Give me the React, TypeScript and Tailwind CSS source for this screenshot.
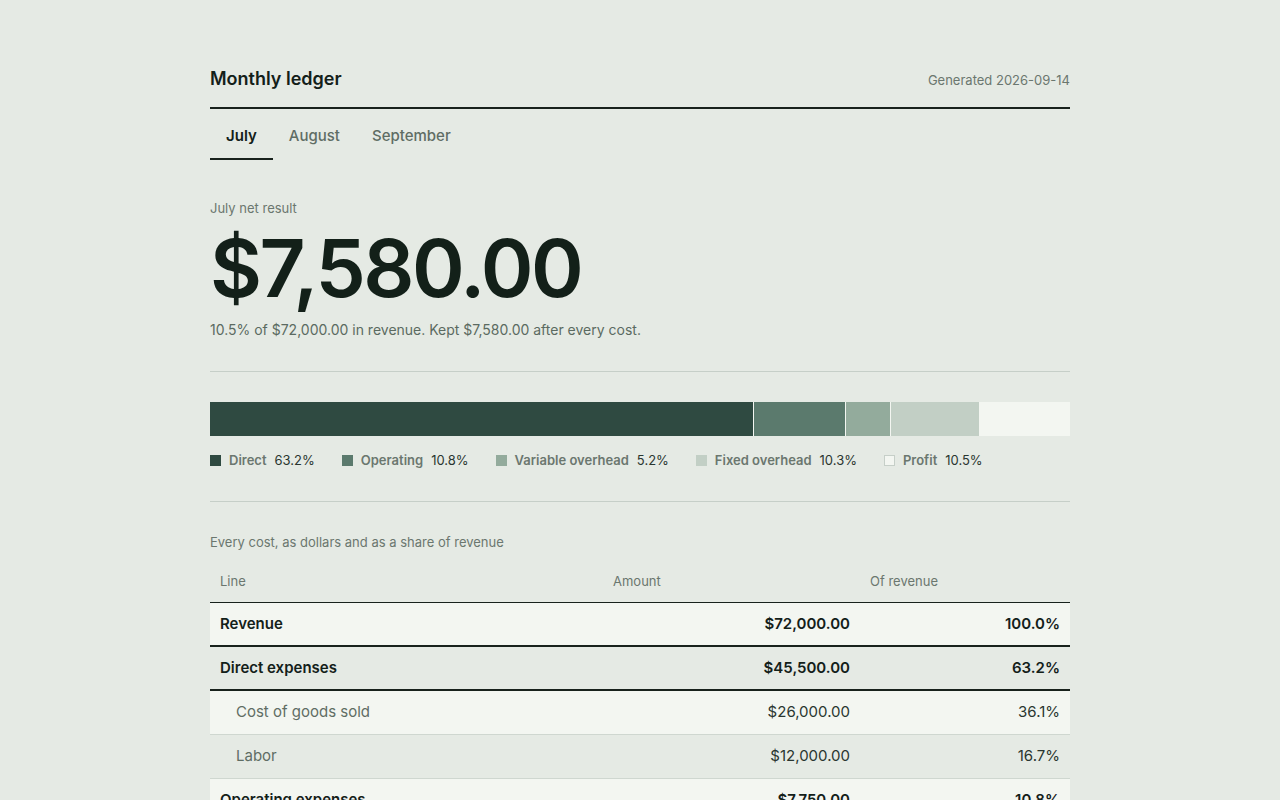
import { useState } from "react";

const months = ["July", "August", "September"];

const segments = [
  { label: "Direct", pct: 63.2, color: "bg-[#2f4a41]", border: false },
  { label: "Operating", pct: 10.8, color: "bg-[#5b7a6d]", border: false },
  { label: "Variable overhead", pct: 5.2, color: "bg-[#93ab9c]", border: false },
  { label: "Fixed overhead", pct: 10.3, color: "bg-[#c2cfc5]", border: false },
  { label: "Profit", pct: 10.5, color: "bg-[#f3f6f1]", border: true },
];

type Row = { line: string; amount: string; share: string; kind: "total" | "group" | "item" };

const rows: Row[] = [
  { line: "Revenue", amount: "$72,000.00", share: "100.0%", kind: "total" },
  { line: "Direct expenses", amount: "$45,500.00", share: "63.2%", kind: "group" },
  { line: "Cost of goods sold", amount: "$26,000.00", share: "36.1%", kind: "item" },
  { line: "Labor", amount: "$12,000.00", share: "16.7%", kind: "item" },
  { line: "Operating expenses", amount: "$7,750.00", share: "10.8%", kind: "group" },
  { line: "Rent", amount: "$4,500.00", share: "6.3%", kind: "item" },
  { line: "Utilities", amount: "$3,250.00", share: "4.5%", kind: "item" },
  { line: "Variable overhead", amount: "$3,744.00", share: "5.2%", kind: "group" },
  { line: "Fixed overhead", amount: "$7,426.00", share: "10.3%", kind: "group" },
  { line: "Net result", amount: "$7,580.00", share: "10.5%", kind: "total" },
];

export default function App() {
  const [month, setMonth] = useState("July");

  return (
    <div className="min-h-screen bg-[#e5eae4] text-[#132019] font-['Inter',sans-serif]">
      <div className="mx-auto w-[860px] pt-[65px] pb-20">
        <header className="flex items-baseline justify-between border-b-2 border-[#18221c] pb-[14px]">
          <h1 className="text-lg font-semibold leading-7">Monthly ledger</h1>
          <span className="text-[13px] text-[#6b776f]">Generated 2026-09-14</span>
        </header>

        <nav className="flex">
          {months.map((m) => (
            <button
              key={m}
              onClick={() => setMonth(m)}
              className={
                m === month
                  ? "h-[51px] px-4 pt-[5px] border-b-2 border-[#18221c] text-[15px] font-semibold text-[#132019]"
                  : "h-[51px] px-4 pt-[5px] border-b-2 border-transparent text-[15px] font-medium text-[#5f6d64]"
              }
            >
              {m}
            </button>
          ))}
        </nav>

        <section className="mt-[38px]">
          <div className="text-[13px] leading-5 text-[#6b776f]">{month} net result</div>
          <div className="mt-[6px] text-[80px] font-semibold leading-[88px] tracking-[-2.5px]">
            $7,580.00
          </div>
          <p className="mt-[6px] text-sm leading-6 text-[#5b6a61]">
            10.5% of $72,000.00 in revenue. Kept $7,580.00 after every cost.
          </p>
        </section>

        <section className="mt-[29px] border-t border-b border-[#c6cfc8] pt-[30px] pb-[31px]">
          <div className="flex h-[34px]">
            {segments.map((s, i) => (
              <div
                key={s.label}
                className={
                  i < segments.length - 1
                    ? `${s.color} h-full border-r border-[#f3f6f1]`
                    : `${s.color} h-full`
                }
                style={{ width: `${s.pct}%` }}
              />
            ))}
          </div>
          <div className="mt-[14px] flex gap-[27px] text-[13px] leading-5">
            {segments.map((s) => (
              <div key={s.label} className="flex items-center">
                <span
                  className={
                    s.border
                      ? `${s.color} mr-2 h-[11px] w-[11px] border border-[#c6cfc8]`
                      : `${s.color} mr-2 h-[11px] w-[11px]`
                  }
                />
                <span className="font-semibold text-[#6b776f]">{s.label}</span>
                <span className="ml-2 text-[#2a3630]">{s.pct.toFixed(1)}%</span>
              </div>
            ))}
          </div>
        </section>

        <section className="mt-[30px]">
          <div className="text-[13px] leading-5 text-[#6b776f]">
            Every cost, as dollars and as a share of revenue
          </div>
          <table className="mt-[10px] w-full table-fixed border-collapse text-[15px]">
            <colgroup>
              <col className="w-[393px]" />
              <col className="w-[257px]" />
              <col className="w-[210px]" />
            </colgroup>
            <thead>
              <tr className="border-b border-[#18221c] text-left text-[13px] text-[#6b776f]">
                <th className="px-[10px] pb-[10px] pt-[10px] font-normal">Line</th>
                <th className="px-[10px] pb-[10px] pt-[10px] font-normal">Amount</th>
                <th className="px-[10px] pb-[10px] pt-[10px] font-normal">Of revenue</th>
              </tr>
            </thead>
            <tbody>
              {rows.map((r, i) => {
                const stripe = i % 2 === 0 ? "bg-[#f3f6f1]" : "";
                const line =
                  r.kind === "item"
                    ? "border-b border-[#cfd7d0]"
                    : "border-b-2 border-[#18221c]";
                const text =
                  r.kind === "item" ? "font-normal text-[#5f6d64]" : "font-semibold text-[#132019]";
                const num =
                  r.kind === "item" ? "font-normal text-[#2a3630]" : "font-semibold text-[#132019]";
                return (
                  <tr key={r.line} className={`${stripe} ${line} h-[44px]`}>
                    <td className={r.kind === "item" ? `pl-[26px] pr-[10px] ${text}` : `px-[10px] ${text}`}>
                      {r.line}
                    </td>
                    <td className={`px-[10px] text-right ${num}`}>{r.amount}</td>
                    <td className={`px-[10px] text-right ${num}`}>{r.share}</td>
                  </tr>
                );
              })}
            </tbody>
          </table>
        </section>
      </div>
    </div>
  );
}
